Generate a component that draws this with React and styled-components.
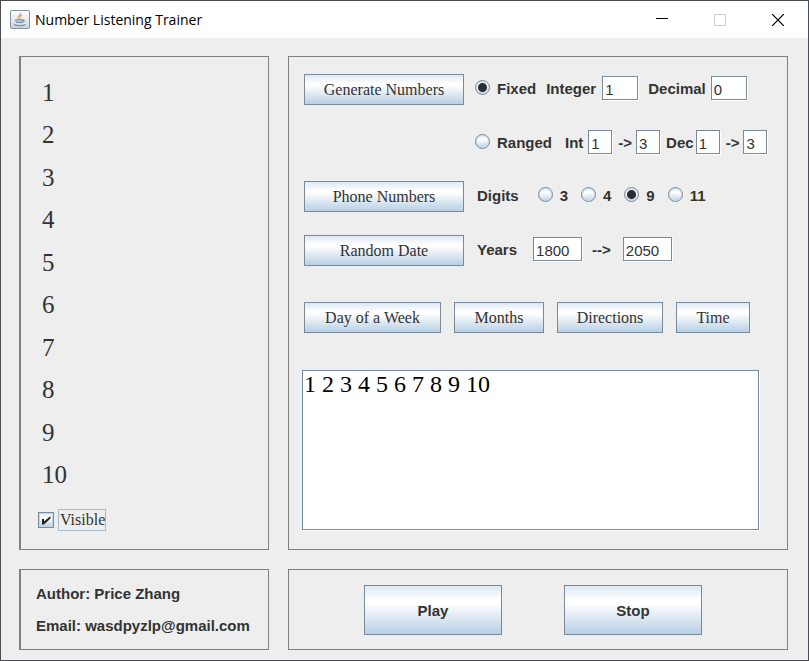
import React, { useState } from "react";
import styled, { createGlobalStyle, css } from "styled-components";

const Global = createGlobalStyle`
  * { box-sizing: border-box; }
  html, body, #root { height: 100%; margin: 0; }
  body { background: #eeeeee; }
  button, input, textarea { margin: 0; font: inherit; color: inherit; }
`;

const sans = `"Liberation Sans", Arial, sans-serif`;
const serif = `"Liberation Serif", "Times New Roman", serif`;

const Window = styled.div`
  display: flex;
  flex-direction: column;
  min-height: 100%;
  border: 1px solid #4a4d54;
  background: #eeeeee;
  color: #333333;
  font: bold 15px/18px ${sans};
`;

const TitleBar = styled.header`
  display: flex;
  align-items: center;
  flex: none;
  height: 37px;
  padding: 0 1px 0 9px;
  background: #ffffff;
`;

const Title = styled.h1`
  flex: 1;
  margin: 0 0 0 5px;
  color: #000000;
  font: 14px/20px "Open Sans", sans-serif;
`;

const CaptionButton = styled.button`
  display: grid;
  place-items: center;
  width: 58px;
  height: 37px;
  padding: 0;
  border: 0;
  background: none;
  color: #000000;
  &:disabled { color: #cccccc; }
`;

const Content = styled.main`
  flex: 1;
  display: grid;
  grid-template-columns: 250px minmax(0, 1fr);
  grid-template-rows: 1fr auto;
  gap: 19px;
  padding: 18px 20px 10px 18px;
`;

const Panel = styled.section`
  border: 1px solid #7f8083;
  border-left-width: ${(p) => (p.$heavy ? "2px" : "1px")};
`;

const ListPanel = styled(Panel)`
  display: flex;
  flex-direction: column;
  align-items: flex-start;
  padding: 15px 15px 18px 17px;
`;

const NumberList = styled.ol`
  flex: 1;
  display: flex;
  flex-direction: column;
  justify-content: space-between;
  margin: 0 0 13px;
  padding: 0 0 0 4px;
  list-style: none;
  font: 25px/42px ${serif};
`;

const CheckLabel = styled.label`
  display: flex;
  align-items: center;
  gap: 4px;
  font: 16px/20px ${serif};
`;

const CheckBox = styled.input.attrs({ type: "checkbox" })`
  appearance: none;
  width: 16px;
  height: 16px;
  border: 1px solid #7a8a99;
  background: linear-gradient(#dfeaf4, #ffffff 35%, #b8cfe5);
  box-shadow: inset 0 0 0 1px #c5d8ea;
  &:checked {
    background: url("data:image/svg+xml,%3Csvg xmlns='http://www.w3.org/2000/svg' viewBox='0 0 14 14'%3E%3Cpath d='M3 6h2v2.500l6.500-5.500v2.500l-6.500 6h-2z' fill='%23222'/%3E%3C/svg%3E") center / 14px 14px no-repeat,
      linear-gradient(#dfeaf4, #ffffff 35%, #b8cfe5);
  }
`;

const FocusText = styled.span`
  padding-left: 1px;
  border: 1px solid #a9b9c8;
`;

const ControlPanel = styled(Panel)`
  display: flex;
  flex-direction: column;
  padding: 17px 28px 19px 13px;
`;

const Row = styled.div`
  display: flex;
  align-items: center;
  min-height: 31px;
  margin-left: 2px;
  margin-bottom: ${(p) => p.$after}px;
`;

const steel = css`
  border: 1px solid #7a8a99;
  border-radius: 0;
  background: linear-gradient(#dde8f3, #ffffff 30%, #ffffff 36%, #b8cfe5);
`;

const ActionButton = styled.button`
  ${steel}
  flex: none;
  width: ${(p) => p.$width}px;
  height: 31px;
  padding: 0;
  font: 16px/20px ${serif};
`;

const Options = styled.div`
  display: flex;
  align-items: center;
  margin-left: ${(p) => p.$indent}px;
  margin-bottom: 4px;
  white-space: nowrap;
`;

const RadioLabel = styled.label`
  display: flex;
  align-items: center;
  gap: 7px;
  margin-right: ${(p) => p.$after}px;
`;

const RadioText = styled.span`
  padding-top: 3px;
`;

const Radio = styled.input.attrs({ type: "radio" })`
  appearance: none;
  width: 15px;
  height: 15px;
  border: 1px solid #7a8a99;
  border-radius: 50%;
  background: linear-gradient(#dde8f3, #ffffff 35%, #b8cfe5);
  box-shadow: inset 0 0 0 1px #d3e0ec;
  &:checked {
    background: radial-gradient(circle, #2b2d30 4px, transparent 5px),
      linear-gradient(#dde8f3, #ffffff 35%, #b8cfe5);
  }
`;

const FieldLabel = styled.label`
  margin-right: ${(p) => p.$after}px;
  padding-top: 3px;
`;

const Field = styled.input`
  width: ${(p) => p.$width}px;
  height: 24px;
  margin-right: ${(p) => p.$after || 0}px;
  padding: 3px 2px 0;
  border: 1px solid #7a8a99;
  background: #ffffff;
  box-shadow: 1px 1px 0 #ffffff;
  font: 15px/18px ${sans};
`;

const Toolbar = styled(Row)`
  gap: 13px;
`;

const Output = styled.textarea`
  flex: 1;
  display: block;
  width: 100%;
  padding: 0 1px;
  border: 1px solid #7a8a99;
  background: #ffffff;
  box-shadow: 1px 1px 0 #ffffff;
  color: #000000;
  font: 24px/26px ${serif};
  resize: none;
  outline: 0;
`;

const AboutPanel = styled(Panel)`
  display: flex;
  flex-direction: column;
  justify-content: center;
  gap: 14px;
  padding-left: 15px;
`;

const Line = styled.p`
  margin: 0;
`;

const PlayerPanel = styled(Panel)`
  display: flex;
  align-items: center;
  gap: 62px;
  padding: 15px 0 14px 75px;
`;

const PlayerButton = styled.button`
  ${steel}
  width: 138px;
  height: 50px;
  padding: 2px 0 0;
`;

function CupIcon() {
  return (
    <svg width="20" height="19" viewBox="0 0 20 19" fill="none" aria-hidden="true">
      <defs>
        <linearGradient id="tile" x1="0" y1="0" x2="0" y2="1">
          <stop offset="0" stopColor="#ffffff" />
          <stop offset="0.5" stopColor="#e6eaee" />
          <stop offset="1" stopColor="#c9d3dc" />
        </linearGradient>
      </defs>
      <rect x="0.5" y="0.5" width="19" height="18" rx="1.5" fill="url(#tile)" stroke="#8496a8" />
      <path d="M10.6 2.5c1 2-3 3-2.4 4.8.2.8 1 1.2 1.2 1.8M12 5c-2 1-2.6 1.8-1.5 3" stroke="#d9a070" strokeWidth="1.2" />
      <path d="M5.500 9.800h7.500l-1 2.700h-5.500zM13 10c2-.5 2 1.800-.6 2.200" stroke="#7690a9" fill="#b9c8d5" />
      <path d="M4 14.500c2 1.500 9.500 1.500 11.500 0" stroke="#7690a9" strokeWidth="1.2" />
    </svg>
  );
}

const numbers = ["1", "2", "3", "4", "5", "6", "7", "8", "9", "10"];
const topics = [
  ["Day of a Week", 137],
  ["Months", 90],
  ["Directions", 106],
  ["Time", 74],
];

export default function App() {
  const [mode, setMode] = useState("fixed");
  const [digits, setDigits] = useState("9");

  return (
    <>
      <Global />
      <Window>
        <TitleBar>
          <CupIcon />
          <Title>Number Listening Trainer</Title>
          <CaptionButton aria-label="Minimize">
            <svg width="12" height="12" stroke="currentColor"><path d="M0 4.5h12" /></svg>
          </CaptionButton>
          <CaptionButton aria-label="Maximize" disabled>
            <svg width="12" height="12" fill="none" stroke="currentColor"><path d="M.5.5h11v11H.5z" /></svg>
          </CaptionButton>
          <CaptionButton aria-label="Close">
            <svg width="12" height="12" stroke="currentColor" strokeWidth="1.2"><path d="M0 0l12 12M12 0L0 12" /></svg>
          </CaptionButton>
        </TitleBar>

        <Content>
          <ListPanel $heavy>
            <NumberList>
              {numbers.map((n) => <li key={n}>{n}</li>)}
            </NumberList>
            <CheckLabel>
              <CheckBox defaultChecked />
              <FocusText>Visible</FocusText>
            </CheckLabel>
          </ListPanel>

          <ControlPanel>
            <Row $after={23}>
              <ActionButton $width={160}>Generate Numbers</ActionButton>
              <Options $indent={11}>
                <RadioLabel $after={10}>
                  <Radio name="mode" checked={mode === "fixed"} onChange={() => setMode("fixed")} />
                  <RadioText>Fixed</RadioText>
                </RadioLabel>
                <FieldLabel htmlFor="integer" $after={6}>Integer</FieldLabel>
                <Field id="integer" $width={36} $after={10} defaultValue="1" />
                <FieldLabel htmlFor="decimal" $after={5}>Decimal</FieldLabel>
                <Field id="decimal" $width={36} defaultValue="0" />
              </Options>
            </Row>
            <Row $after={22}>
              <Options $indent={171}>
                <RadioLabel $after={13}>
                  <Radio name="mode" checked={mode === "ranged"} onChange={() => setMode("ranged")} />
                  <RadioText>Ranged</RadioText>
                </RadioLabel>
                <FieldLabel htmlFor="int-from" $after={5}>Int</FieldLabel>
                <Field id="int-from" $width={24} $after={6} defaultValue="1" />
                <FieldLabel htmlFor="int-to" $after={4}>-&gt;</FieldLabel>
                <Field id="int-to" $width={24} $after={6} defaultValue="3" />
                <FieldLabel htmlFor="dec-from" $after={2}>Dec</FieldLabel>
                <Field id="dec-from" $width={24} $after={6} defaultValue="1" />
                <FieldLabel htmlFor="dec-to" $after={4}>-&gt;</FieldLabel>
                <Field id="dec-to" $width={24} defaultValue="3" />
              </Options>
            </Row>
            <Row $after={23}>
              <ActionButton $width={160}>Phone Numbers</ActionButton>
              <Options $indent={13} role="radiogroup" aria-labelledby="digits">
                <FieldLabel as="span" id="digits" $after={19}>Digits</FieldLabel>
                {["3", "4", "9", "11"].map((d) => (
                  <RadioLabel key={d} $after={13}>
                    <Radio name="digits" checked={digits === d} onChange={() => setDigits(d)} />
                    <RadioText>{d}</RadioText>
                  </RadioLabel>
                ))}
              </Options>
            </Row>
            <Row $after={36}>
              <ActionButton $width={160}>Random Date</ActionButton>
              <Options $indent={13}>
                <FieldLabel htmlFor="year-from" $after={16}>Years</FieldLabel>
                <Field id="year-from" $width={49} $after={10} defaultValue="1800" />
                <FieldLabel htmlFor="year-to" $after={12}>--&gt;</FieldLabel>
                <Field id="year-to" $width={49} defaultValue="2050" />
              </Options>
            </Row>
            <Toolbar $after={37}>
              {topics.map(([label, width]) => (
                <ActionButton key={label} $width={width}>{label}</ActionButton>
              ))}
            </Toolbar>
            <Output aria-label="Numbers" spellCheck={false} defaultValue={numbers.join(" ")} />
          </ControlPanel>

          <AboutPanel $heavy>
            <Line>Author: Price Zhang</Line>
            <Line>Email: wasdpyzlp@gmail.com</Line>
          </AboutPanel>

          <PlayerPanel>
            <PlayerButton>Play</PlayerButton>
            <PlayerButton>Stop</PlayerButton>
          </PlayerPanel>
        </Content>
      </Window>
    </>
  );
}
